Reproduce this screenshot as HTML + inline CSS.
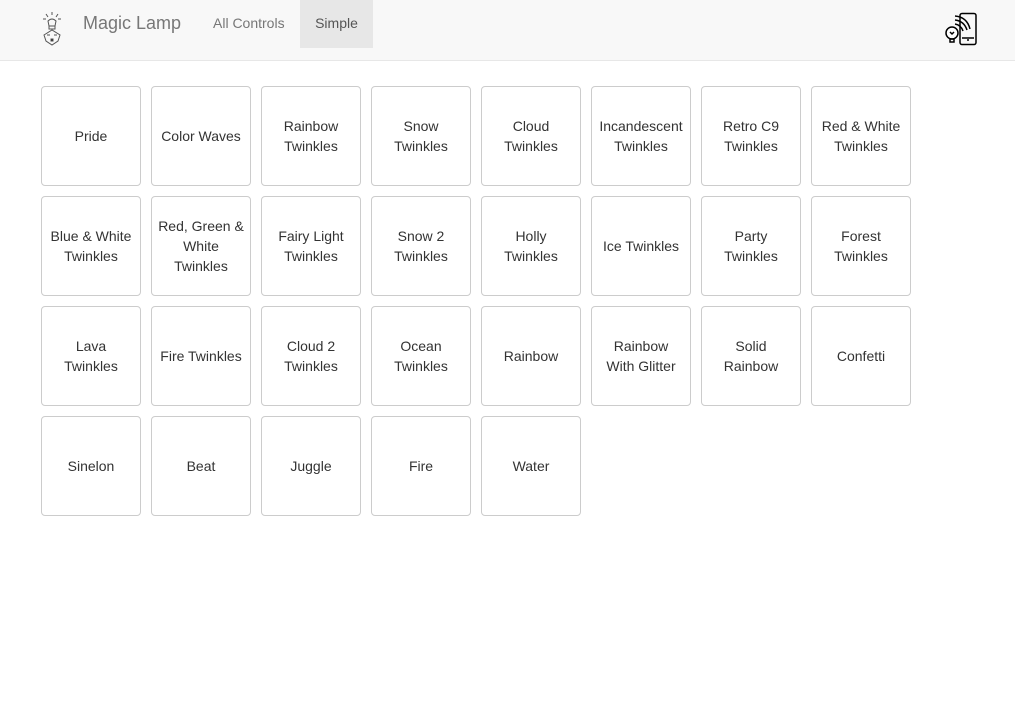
<!DOCTYPE html>
<html><head><meta charset="utf-8"><style>
*{box-sizing:border-box;margin:0;padding:0}
body{width:1015px;height:719px;background:#fff;font-family:"Liberation Sans",Helvetica,Arial,sans-serif;color:#333;overflow:hidden;position:relative}
.nav{position:absolute;left:0;top:0;width:1015px;height:61px;background:#f8f8f8;border-bottom:1px solid #e7e7e7}
.brand{position:absolute;left:83px;top:13px;font-size:18px;color:#777}
.l1{position:absolute;left:213px;top:15px;font-size:14px;color:#777}
.act{position:absolute;left:300px;top:0;width:73px;height:48px;background:#e7e7e7;color:#555;font-size:14px;text-align:center;padding-top:15px}
.b{position:absolute;width:100px;height:100px;border:1px solid #ccc;border-radius:4px;display:flex;align-items:center;justify-content:center;text-align:center;font-size:14px;line-height:20px;color:#333;padding:0 4px}
</style></head><body>
<div class="nav">
<svg style="position:absolute;left:40px;top:11px" width="24" height="36" viewBox="0 0 24 36" fill="none" stroke="#555" stroke-width="1">
<path d="M12 1v3M6 3l2 3M18 3l-2 3M3 8h3M18 8h3"/>
<path d="M8 10q4-4 8 0l-1 5H9z"/>
<path d="M9 15h6v3H9z"/>
<path d="M4 24l8-5 8 5-2 6-6 4-6-4z"/>
<path d="M7 24h3M14 24h3"/>
<rect x="11" y="28" width="2" height="2" fill="#000"/>
</svg>
<div class="brand">Magic Lamp</div>
<div class="l1">All Controls</div>
<div class="act">Simple</div>
<svg style="position:absolute;left:942px;top:12px" width="36" height="34" viewBox="0 0 36 34" fill="none" stroke="#000" stroke-width="1.5">
<rect x="18" y="1.5" width="16" height="31" rx="2"/>
<path d="M20 26h12M26 27v2"/>
<path d="M13 12q6 1 8 7M13 8q9 1 12 10M13 4q12 1 15 13"/>
<circle cx="10" cy="21" r="6" fill="#fff"/>
<path d="M8 27h4v3h-4zM8 20l2 2 2-2"/>
</svg>
</div>
<div class="b" style="left:41px;top:86px">Pride</div>
<div class="b" style="left:151px;top:86px">Color Waves</div>
<div class="b" style="left:261px;top:86px">Rainbow<br>Twinkles</div>
<div class="b" style="left:371px;top:86px">Snow<br>Twinkles</div>
<div class="b" style="left:481px;top:86px">Cloud<br>Twinkles</div>
<div class="b" style="left:591px;top:86px">Incandescent<br>Twinkles</div>
<div class="b" style="left:701px;top:86px">Retro C9<br>Twinkles</div>
<div class="b" style="left:811px;top:86px">Red &amp; White<br>Twinkles</div>
<div class="b" style="left:41px;top:196px">Blue &amp; White<br>Twinkles</div>
<div class="b" style="left:151px;top:196px">Red, Green &amp;<br>White<br>Twinkles</div>
<div class="b" style="left:261px;top:196px">Fairy Light<br>Twinkles</div>
<div class="b" style="left:371px;top:196px">Snow 2<br>Twinkles</div>
<div class="b" style="left:481px;top:196px">Holly<br>Twinkles</div>
<div class="b" style="left:591px;top:196px">Ice Twinkles</div>
<div class="b" style="left:701px;top:196px">Party<br>Twinkles</div>
<div class="b" style="left:811px;top:196px">Forest<br>Twinkles</div>
<div class="b" style="left:41px;top:306px">Lava<br>Twinkles</div>
<div class="b" style="left:151px;top:306px">Fire Twinkles</div>
<div class="b" style="left:261px;top:306px">Cloud 2<br>Twinkles</div>
<div class="b" style="left:371px;top:306px">Ocean<br>Twinkles</div>
<div class="b" style="left:481px;top:306px">Rainbow</div>
<div class="b" style="left:591px;top:306px">Rainbow<br>With Glitter</div>
<div class="b" style="left:701px;top:306px">Solid<br>Rainbow</div>
<div class="b" style="left:811px;top:306px">Confetti</div>
<div class="b" style="left:41px;top:416px">Sinelon</div>
<div class="b" style="left:151px;top:416px">Beat</div>
<div class="b" style="left:261px;top:416px">Juggle</div>
<div class="b" style="left:371px;top:416px">Fire</div>
<div class="b" style="left:481px;top:416px">Water</div>
</body></html>
